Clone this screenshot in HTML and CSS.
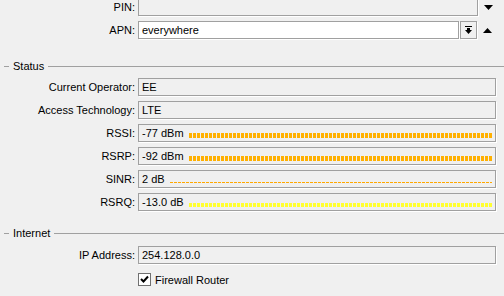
FILE: index.html
```html
<!DOCTYPE html>
<html lang="en">
<head>
  <meta charset="UTF-8">
  <title>LTE Interface</title>
  <link rel="stylesheet" href="styles.css">
</head>
<body>

  <div class="panel">
    <div class="row first">
      <span class="label">PIN:</span>
      <div class="field pin"></div>
      <span class="arrow">
        <svg width="9" height="5" viewBox="0 0 9 5"><polygon points="0,0 9,0 4.5,5" fill="#000"/></svg>
      </span>
    </div>
    <div class="row">
      <span class="label">APN:</span>
      <div class="field apn white">everywhere</div>
      <div class="btn">
        <svg width="7" height="9" viewBox="0 0 7 9">
          <rect x="0" y="0" width="7" height="1" fill="#000"/>
          <rect x="2" y="2" width="3" height="2" fill="#000"/>
          <polygon points="0,4 7,4 3.5,8" fill="#000"/>
        </svg>
      </div>
      <span class="arrow">
        <svg width="9" height="5" viewBox="0 0 9 5"><polygon points="0,5 9,5 4.5,0" fill="#000"/></svg>
      </span>
    </div>

    <div class="section status">
      <span class="dash"></span>
      <span class="title">Status</span>
      <span class="line"></span>
    </div>

    <div class="row">
      <span class="label">Current Operator:</span>
      <div class="field">EE</div>
    </div>
    <div class="row">
      <span class="label">Access Technology:</span>
      <div class="field">LTE</div>
    </div>
    <div class="row">
      <span class="label">RSSI:</span>
      <div class="field"><span>-77 dBm</span><span class="bar orange"></span></div>
    </div>
    <div class="row">
      <span class="label">RSRP:</span>
      <div class="field"><span>-92 dBm</span><span class="bar orange"></span></div>
    </div>
    <div class="row">
      <span class="label">SINR:</span>
      <div class="field"><span>2 dB</span><span class="bar thin"></span></div>
    </div>
    <div class="row">
      <span class="label">RSRQ:</span>
      <div class="field"><span>-13.0 dB</span><span class="bar yellow"></span></div>
    </div>

    <div class="section internet">
      <span class="dash"></span>
      <span class="title">Internet</span>
      <span class="line"></span>
    </div>

    <div class="row">
      <span class="label">IP Address:</span>
      <div class="field">254.128.0.0</div>
    </div>
    <div class="check-row">
      <span class="check">
        <svg width="9" height="9" viewBox="0 0 9 9"><path d="M1 4 L3.5 6.5 L8 1.5" stroke="#000" stroke-width="2" fill="none"/></svg>
      </span>
      <span>Firewall Router</span>
    </div>
  </div>

</body>
</html>
```

FILE: styles.css
```css
body {
  margin: 0;
  background-color: #f0f0f0;
  font-family: "Liberation Sans", Arial, sans-serif;
  font-size: 11px;
  color: #000;
  overflow: hidden;
}

.panel {
  display: flex;
  flex-direction: column;
}

.row {
  display: flex;
  align-items: center;
  height: 18px;
  margin-bottom: 5px;
}

.row.first {
  margin-top: -2px;
}

.label {
  width: 135px;
  padding-right: 3px;
  text-align: right;
  flex: none;
}

.field {
  box-sizing: border-box;
  width: 358px;
  height: 18px;
  border: 1px solid #a0a0a0;
  box-shadow: 1px 1px 0 #fff;
  padding: 0 2px 0 3px;
  display: flex;
  align-items: center;
  white-space: nowrap;
}

.field.white {
  background-color: #fff;
}

.field.pin {
  width: 340px;
}

.field.apn {
  width: 321px;
}

.btn {
  box-sizing: border-box;
  width: 17px;
  height: 18px;
  margin-left: 1px;
  border: 1px solid #a0a0a0;
  box-shadow: 1px 1px 0 #fff;
  display: flex;
  align-items: center;
  justify-content: center;
}

.arrow {
  margin-left: 6px;
  display: flex;
}

.section {
  display: flex;
  align-items: center;
  height: 14px;
}

.section.status {
  margin-top: 15px;
  margin-bottom: 5px;
}

.section.internet {
  margin-top: 10px;
  margin-bottom: 6px;
}

.dash {
  width: 5px;
  height: 1px;
  margin-left: 4px;
  margin-right: 4px;
  background-color: #a0a0a0;
}

.line {
  flex: 1;
  height: 1px;
  margin-left: 4px;
  background-color: #a0a0a0;
}

.bar {
  flex: 1;
  align-self: flex-end;
  margin-left: 5px;
  margin-right: 1px;
}

.bar.orange {
  height: 5px;
  margin-bottom: 3px;
  background: repeating-linear-gradient(to right, #ffb000 0 3px, transparent 3px 4px);
}

.bar.thin {
  height: 1px;
  margin-bottom: 4px;
  background: repeating-linear-gradient(to right, #ffa800 0 3px, transparent 3px 4px);
}

.bar.yellow {
  height: 4px;
  margin-bottom: 3px;
  background: repeating-linear-gradient(to right, #ffff30 0 3px, transparent 3px 4px);
}

.check-row {
  display: flex;
  align-items: center;
  margin-top: 4px;
  padding-left: 138px;
  height: 13px;
}

.check {
  box-sizing: border-box;
  width: 13px;
  height: 13px;
  margin-right: 4px;
  border: 1px solid #707070;
  background-color: #fff;
  display: flex;
  align-items: center;
  justify-content: center;
}
```
